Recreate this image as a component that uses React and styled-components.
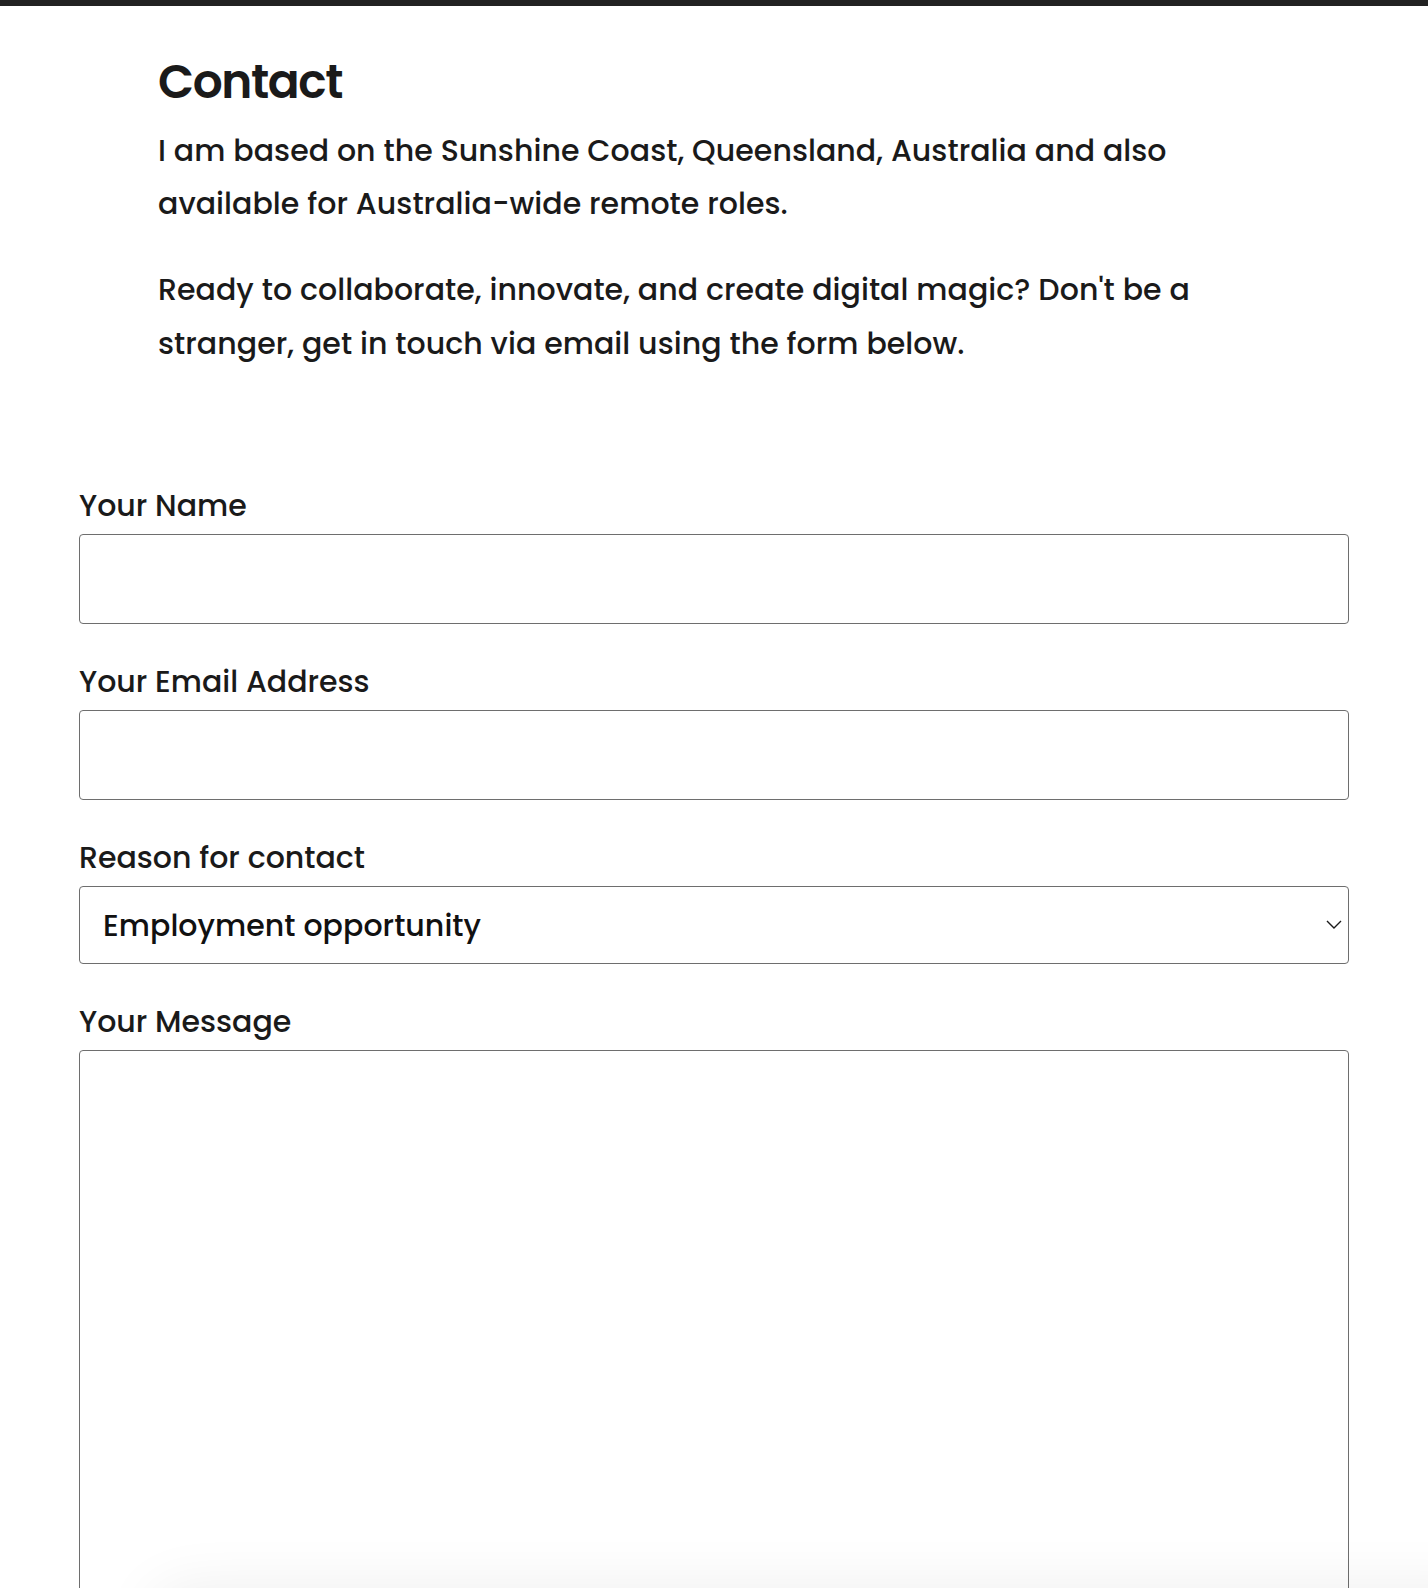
import React from "react";
import styled, { createGlobalStyle } from "styled-components";

const Global = createGlobalStyle`
  html, body { margin: 0; padding: 0; background: #ffffff; }
  body {
    font-family: Poppins, Inter, "Noto Sans", sans-serif;
    color: #1a1a1a;
    -webkit-font-smoothing: antialiased;
  }
  * { box-sizing: border-box; }
`;

const Page = styled.div`
  border-top: 6px solid #222222;
  min-height: 1588px;
`;

const Intro = styled.section`
  max-width: 1112px;
  margin: 0 auto;
  padding-top: 44px;
`;

const Heading = styled.h1`
  margin: 0 0 9.5px;
  font-size: 47px;
  line-height: 64px;
  font-weight: 600;
  letter-spacing: -1.4px;
  color: #1a1a1a;
`;

const Paragraph = styled.p`
  margin: 0 0 32px;
  font-size: 30px;
  line-height: 53.7px;
  font-weight: 500;
  letter-spacing: 0.05px;
  color: #1a1a1a;
`;

const Form = styled.form`
  max-width: 1270px;
  margin: 0 auto;
  padding-top: 84px;
  display: flex;
  flex-direction: column;
  gap: 38px;
`;

const Field = styled.div`
  display: flex;
  flex-direction: column;
`;

const Label = styled.label`
  display: block;
  font-size: 30px;
  line-height: 40px;
  font-weight: 500;
  color: #1a1a1a;
  margin-bottom: 8px;
`;

const fieldBox = `
  width: 100%;
  border: 1px solid #6e6e6e;
  border-radius: 4px;
  background: #ffffff;
  font-family: inherit;
  color: #111111;
  outline: none;
`;

const TextInput = styled.input`
  ${fieldBox}
  height: ${(p) => p.$h}px;
  padding: 0 24px;
  font-size: 28px;
`;

const SelectWrap = styled.div`
  position: relative;
`;

const Select = styled.select`
  ${fieldBox}
  appearance: none;
  -webkit-appearance: none;
  height: 78px;
  padding: 0 60px 0 23px;
  font-size: 30px;
  font-weight: 500;
  letter-spacing: 0.05px;
  color: #111111;
`;

const Chevron = styled.svg`
  position: absolute;
  right: 7px;
  top: 50%;
  width: 16px;
  height: 9px;
  margin-top: -5px;
  pointer-events: none;
`;

const TextArea = styled.textarea`
  ${fieldBox}
  height: 640px;
  padding: 20px 24px;
  font-size: 28px;
  resize: none;
`;

const BottomShade = styled.div`
  position: fixed;
  left: 150px;
  right: -80px;
  bottom: -70px;
  height: 70px;
  border-radius: 40px;
  box-shadow: 0 0 60px rgba(0, 0, 0, 0.07);
  pointer-events: none;
`;

export default function App() {
  return (
    <>
      <Global />
      <Page>
        <Intro>
          <Heading>Contact</Heading>
          <Paragraph>
            I am based on the Sunshine Coast, Queensland, Australia and also
            available for Australia-wide remote roles.
          </Paragraph>
          <Paragraph>
            Ready to collaborate, innovate, and create digital magic? Don't be a
            stranger, get in touch via email using the form below.
          </Paragraph>
        </Intro>
        <Form onSubmit={(e) => e.preventDefault()}>
          <Field>
            <Label htmlFor="name">Your Name</Label>
            <TextInput id="name" type="text" $h={90} />
          </Field>
          <Field>
            <Label htmlFor="email">Your Email Address</Label>
            <TextInput id="email" type="email" $h={90} />
          </Field>
          <Field>
            <Label htmlFor="reason">Reason for contact</Label>
            <SelectWrap>
              <Select id="reason" defaultValue="employment">
                <option value="employment">Employment opportunity</option>
                <option value="freelance">Freelance project</option>
                <option value="other">Other</option>
              </Select>
              <Chevron viewBox="0 0 16 9" fill="none">
                <path d="M1 1l7 7 7-7" stroke="#1a1a1a" strokeWidth="1.4" />
              </Chevron>
            </SelectWrap>
          </Field>
          <Field>
            <Label htmlFor="message">Your Message</Label>
            <TextArea id="message" />
          </Field>
        </Form>
      </Page>
      <BottomShade />
    </>
  );
}
